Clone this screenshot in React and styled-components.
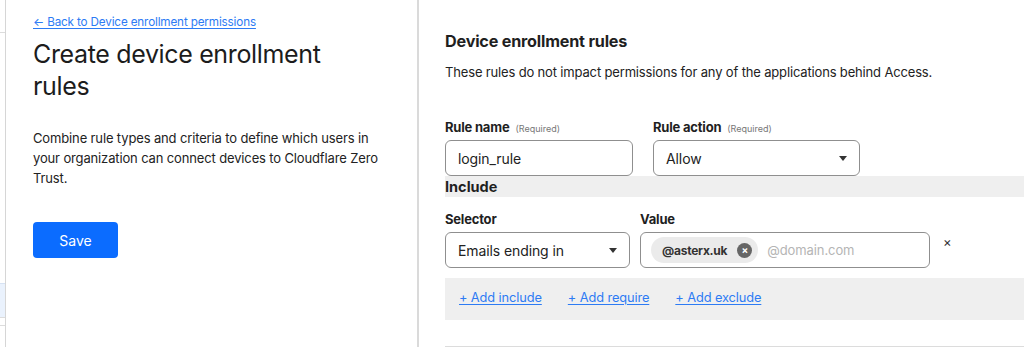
import styled, { createGlobalStyle } from 'styled-components';

const GlobalStyle = createGlobalStyle`
  html, body {
    margin: 0;
    padding: 0;
    background: #fff;
  }
  body {
    font-family: Inter, "Noto Sans", "Liberation Sans", sans-serif;
    color: #1f1f1f;
  }
`;

const Page = styled.div`
  display: flex;
  height: 347px;
  width: 1024px;
  overflow: hidden;
`;

const Sliver = styled.div`
  width: 5px;
  border-right: 1px solid #d6d6d6;
  display: flex;
  flex-direction: column;
`;

const SliverLine = styled.div`
  height: ${(p) => p.$h}px;
  margin-top: ${(p) => p.$top}px;
  border-bottom: 1px solid #dcdcdc;
  background: ${(p) => (p.$blue ? '#eaf2fd' : 'transparent')};
  border-top: ${(p) => (p.$blue ? '1px solid #d6e2f3' : 'none')};
`;

const LeftPanel = styled.div`
  width: 413px;
  border-right: 2px solid #dadada;
  padding: 14px 0 0 27px;
  box-sizing: border-box;
`;

const BackLink = styled.a`
  display: block;
  font-size: 11.7px;
  line-height: 16px;
  color: #2d7bf4;
  text-decoration: underline;
  text-underline-offset: 2px;
  letter-spacing: -0.15px;
`;

const Title = styled.h1`
  margin: 8px 0 0;
  font-size: 25px;
  font-weight: 400;
  line-height: 32px;
  letter-spacing: -0.35px;
  color: #1c1c1c;
  width: 320px;
`;

const Intro = styled.p`
  margin: 26px 0 0;
  font-size: 13px;
  line-height: 20px;
  color: #222;
  width: 352px;
  letter-spacing: -0.14px;
`;

const SaveButton = styled.button`
  margin-top: 34px;
  width: 85px;
  height: 36px;
  border: none;
  border-radius: 4px;
  background: #0b6cff;
  color: #fff;
  font-family: inherit;
  font-size: 14px;
`;

const RightPanel = styled.div`
  flex: 1;
  padding: 30px 0 0 26px;
  box-sizing: border-box;
  display: flex;
  flex-direction: column;
`;

const SectionTitle = styled.h2`
  margin: 0;
  font-size: 16.2px;
  font-weight: 700;
  line-height: 22px;
  letter-spacing: -0.2px;
  color: #1f1f1f;
`;

const SectionText = styled.p`
  margin: 11px 0 0;
  font-size: 13px;
  line-height: 18px;
  color: #222;
  letter-spacing: -0.16px;
`;

const FieldRow = styled.div`
  display: grid;
  grid-template-columns: ${(p) => p.$cols};
  column-gap: ${(p) => p.$gap}px;
  align-items: end;
  margin-top: ${(p) => p.$top}px;
`;

const Label = styled.div`
  font-size: 13px;
  font-weight: 700;
  line-height: 16px;
  height: 16px;
  margin-bottom: 5px;
  color: #1f1f1f;
  letter-spacing: -0.2px;
`;

const Required = styled.span`
  font-size: 9px;
  font-weight: 400;
  color: #777;
  margin-left: 6px;
  letter-spacing: 0;
`;

const Box = styled.div`
  height: 36px;
  box-sizing: border-box;
  border: 1px solid #8f8f8f;
  border-radius: 6px;
  display: flex;
  align-items: center;
  padding: 0 ${(p) => (p.$chips ? 10 : 12)}px;
  font-size: 14px;
  color: #222;
  background: #fff;
  letter-spacing: -0.1px;
`;

const Caret = styled.span`
  margin-left: auto;
  width: 0;
  height: 0;
  border-left: 4.5px solid transparent;
  border-right: 4.5px solid transparent;
  border-top: 5px solid #333;
`;

const Band = styled.div`
  background: #efefef;
  height: ${(p) => p.$h}px;
  margin-top: ${(p) => p.$top}px;
  display: flex;
  align-items: center;
  gap: 26px;
  padding-left: ${(p) => p.$pad}px;
  font-size: 14.5px;
  font-weight: ${(p) => (p.$bold ? 700 : 400)};
  color: #1f1f1f;
`;

const Chip = styled.span`
  display: inline-flex;
  align-items: center;
  height: 26px;
  padding: 0 6px 0 11px;
  border-radius: 13px;
  background: #ebebeb;
  font-size: 12px;
  font-weight: 700;
  color: #333;
  gap: 10px;
  letter-spacing: -0.25px;
`;

const ChipClose = styled.span`
  width: 15px;
  height: 15px;
  border-radius: 50%;
  background: #666;
  color: #fff;
  font-size: 10px;
  line-height: 15px;
  text-align: center;
  font-weight: 700;
`;

const Placeholder = styled.span`
  margin-left: 9px;
  font-size: 13px;
  color: #b5b5b5;
  letter-spacing: -0.1px;
`;

const RemoveRow = styled.span`
  font-size: 13px;
  color: #333;
  padding-left: 3px;
  line-height: 16px;
  margin-bottom: 18px;
`;

const AddLink = styled.a`
  color: #2d7bf4;
  text-decoration: underline;
  text-underline-offset: 2px;
  font-size: 12.8px;
  letter-spacing: -0.1px;
  margin-top: -4px;
`;

const BottomRule = styled.div`
  margin-top: auto;
  border-bottom: 1px solid #dcdcdc;
`;

export default function App() {
  return (
    <>
      <GlobalStyle />
      <Page>
        <Sliver>
          <SliverLine $top={0} $h={32} />
          <SliverLine $top={250} $h={33} $blue />
          <SliverLine $top={0} $h={7} />
        </Sliver>
        <LeftPanel>
          <BackLink>← Back to Device enrollment permissions</BackLink>
          <Title>Create device enrollment rules</Title>
          <Intro>
            Combine rule types and criteria to define which users in your organization can connect
            devices to Cloudflare Zero Trust.
          </Intro>
          <SaveButton>Save</SaveButton>
        </LeftPanel>
        <RightPanel>
          <SectionTitle>Device enrollment rules</SectionTitle>
          <SectionText>
            These rules do not impact permissions for any of the applications behind Access.
          </SectionText>
          <FieldRow $cols="188px 207px" $gap={20} $top={38}>
            <div>
              <Label>
                Rule name<Required>(Required)</Required>
              </Label>
              <Box>login_rule</Box>
            </div>
            <div>
              <Label>
                Rule action<Required>(Required)</Required>
              </Label>
              <Box>
                Allow
                <Caret />
              </Box>
            </div>
          </FieldRow>
          <Band $h={21} $top={0} $pad={0} $bold>
            Include
          </Band>
          <FieldRow $cols="185px 290px auto" $gap={10} $top={14}>
            <div>
              <Label>Selector</Label>
              <Box>
                Emails ending in
                <Caret />
              </Box>
            </div>
            <div>
              <Label>Value</Label>
              <Box $chips>
                <Chip>
                  @asterx.uk<ChipClose>×</ChipClose>
                </Chip>
                <Placeholder>@domain.com</Placeholder>
              </Box>
            </div>
            <RemoveRow>×</RemoveRow>
          </FieldRow>
          <Band $h={42} $top={10} $pad={14}>
            <AddLink>+ Add include</AddLink>
            <AddLink>+ Add require</AddLink>
            <AddLink>+ Add exclude</AddLink>
          </Band>
          <BottomRule />
        </RightPanel>
      </Page>
    </>
  );
}
